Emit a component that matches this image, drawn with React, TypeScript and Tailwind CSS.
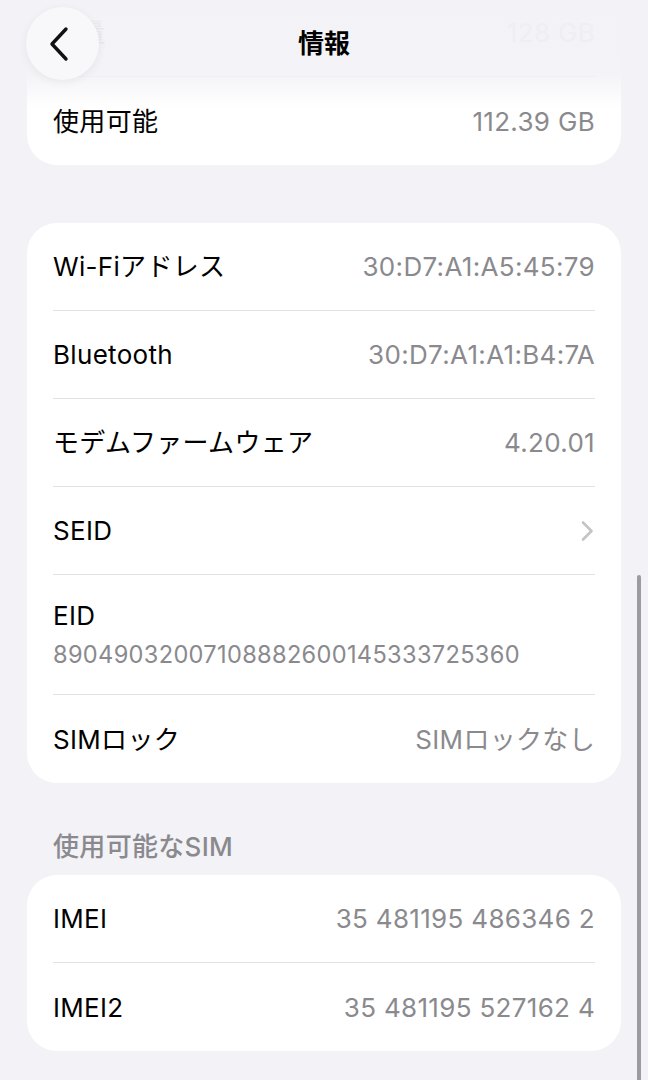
type Row = { label: string; value?: string; chevron?: boolean; stacked?: boolean };

const STORAGE: Row[] = [
  { label: '容量', value: '128 GB' },
  { label: '使用可能', value: '112.39 GB' },
];

const NETWORK: Row[] = [
  { label: 'Wi-Fiアドレス', value: '30:D7:A1:A5:45:79' },
  { label: 'Bluetooth', value: '30:D7:A1:A1:B4:7A' },
  { label: 'モデムファームウェア', value: '4.20.01' },
  { label: 'SEID', chevron: true },
  { label: 'EID', value: '89049032007108882600145333725360', stacked: true },
  { label: 'SIMロック', value: 'SIMロックなし' },
];

const SIM: Row[] = [
  { label: 'IMEI', value: '35 481195 486346 2' },
  { label: 'IMEI2', value: '35 481195 527162 4' },
];

function Card({ rows }: { rows: Row[] }) {
  return (
    <div className="bg-white rounded-[30px] px-[26px]">
      {rows.map((r, i) => {
        const last = i === rows.length - 1;
        const border = last ? '' : 'border-b border-[#e2e2e7]';
        if (r.stacked) {
          return (
            <div key={r.label} className={`flex flex-col justify-center h-[120px] ${border}`}>
              <span className="text-[26px] leading-[32px] text-black">{r.label}</span>
              <span className="text-[23.6px] leading-[30px] mt-[8px] text-[#8a8a8e]">{r.value}</span>
            </div>
          );
        }
        return (
          <div key={r.label} className={`flex items-center justify-between h-[88px] ${border}`}>
            <span className="text-[26px] text-black">{r.label}</span>
            {r.chevron ? (
              <svg width="14" height="22" viewBox="0 0 14 22" className="mr-[1px]">
                <path d="M3 2.5 L11.5 11 L3 19.5" fill="none" stroke="#c4c4c8" strokeWidth="2.6" strokeLinecap="round" strokeLinejoin="round" />
              </svg>
            ) : (
              <span className="text-[26px] text-[#8a8a8e]">{r.value}</span>
            )}
          </div>
        );
      })}
    </div>
  );
}

export default function App() {
  return (
    <div
      className="relative w-[648px] h-[1080px] overflow-hidden bg-[#f2f2f7] tracking-[0.02em]"
      style={{ fontFamily: 'Inter, "Noto Sans CJK JP", sans-serif' }}
    >
      {/* Scrolled content */}
      <div className="px-[27px] -mt-[11px]">
        <Card rows={STORAGE} />
        <div className="mt-[58px]">
          <Card rows={NETWORK} />
        </div>
        <div className="mt-[48px] mb-[12px] px-[26px] text-[26px] leading-[32px] font-medium text-[#8a8a8e]">
          使用可能なSIM
        </div>
        <Card rows={SIM} />
      </div>

      {/* Header overlay */}
      <div className="absolute inset-x-0 top-0 h-[108px] bg-[linear-gradient(to_bottom,rgba(242,242,247,0.975)_0%,rgba(242,242,247,0.94)_66%,rgba(242,242,247,0)_100%)]" />
      <div className="absolute inset-x-0 top-0 h-[86px] flex items-center justify-center">
        <span className="text-[26px] font-bold text-black tracking-normal">情報</span>
      </div>
      <button className="absolute left-[26px] top-[7px] w-[73px] h-[73px] rounded-full bg-[#f8f8fa] shadow-[0_2px_10px_rgba(0,0,0,0.06)] flex items-center justify-center">
        <svg width="24" height="36" viewBox="0 0 24 36" className="-ml-[6px]">
          <path d="M18 3 L4 18 L18 33" fill="none" stroke="#111" strokeWidth="3.4" strokeLinecap="round" strokeLinejoin="round" />
        </svg>
      </button>

      {/* Scroll indicator */}
      <div className="absolute right-[7px] top-[575px] w-[4px] h-[520px] rounded-full bg-[#9c9ca0]" />
    </div>
  );
}
